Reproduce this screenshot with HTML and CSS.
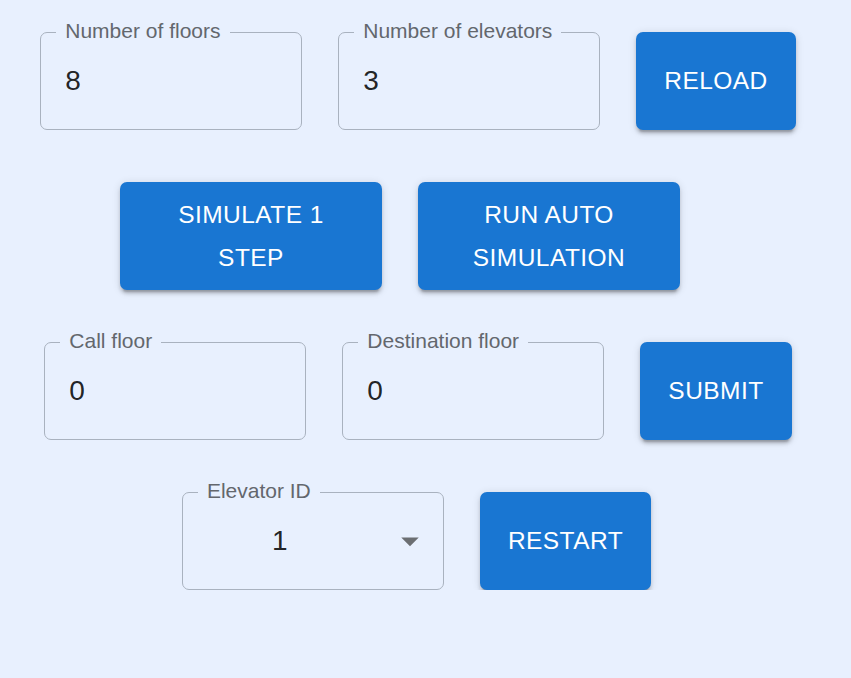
FILE: index.html
```html
<!DOCTYPE html>
<html lang="en">
<head>
<meta charset="utf-8">
<title>Elevator simulation</title>
<link rel="stylesheet" href="styles.css">
</head>
<body>
<main class="page">
  <div class="row">
    <div class="field">
      <label class="field-label">Number of floors</label>
      <input class="field-input" type="text" value="8">
    </div>
    <div class="field">
      <label class="field-label">Number of elevators</label>
      <input class="field-input" type="text" value="3">
    </div>
    <button class="btn">RELOAD</button>
  </div>

  <div class="row row-offset">
    <button class="btn btn-wide">SIMULATE 1 STEP</button>
    <button class="btn btn-wide">RUN AUTO SIMULATION</button>
  </div>

  <div class="row">
    <div class="field">
      <label class="field-label">Call floor</label>
      <input class="field-input" type="text" value="0">
    </div>
    <div class="field">
      <label class="field-label">Destination floor</label>
      <input class="field-input" type="text" value="0">
    </div>
    <button class="btn">SUBMIT</button>
  </div>

  <div class="row row-last">
    <div class="field field-select">
      <label class="field-label">Elevator ID</label>
      <span class="select-value">1</span>
      <svg class="select-arrow" viewBox="0 0 24 24" width="42" height="42" aria-hidden="true"><path d="M7 10l5 5 5-5z"/></svg>
    </div>
    <button class="btn">RESTART</button>
  </div>
</main>
</body>
</html>
```

FILE: styles.css
```css
html, body {
  margin: 0;
  padding: 0;
  background: #e8f0fe;
}

body {
  font-family: "Liberation Sans", Arial, Helvetica, sans-serif;
  color: rgba(0, 0, 0, 0.87);
}

.page {
  width: 836px;
  padding-top: 32px;
  display: flex;
  flex-direction: column;
  gap: 52px;
}

.row {
  display: flex;
  justify-content: center;
  align-items: stretch;
  gap: 36px;
}

.row-offset {
  padding-right: 36px;
}

.row-last {
  padding-right: 3px;
}

.field {
  position: relative;
  box-sizing: border-box;
  width: 262px;
  height: 98px;
  border: 1px solid #a9b2bf;
  border-radius: 7px;
  display: flex;
  align-items: center;
  padding: 0 24px;
}

.field-label {
  position: absolute;
  top: -17px;
  left: 15px;
  padding: 0 9px;
  background: #e8f0fe;
  font-size: 21px;
  line-height: 30px;
  color: #63676d;
  white-space: nowrap;
}

.field-input {
  width: 100%;
  border: none;
  outline: none;
  background: transparent;
  font-family: inherit;
  font-size: 28px;
  color: rgba(0, 0, 0, 0.87);
  padding: 0;
  margin: 0;
  line-height: 40px;
  height: 40px;
}

.field-select {
  padding-left: 89px;
}

.select-value {
  font-size: 28px;
  line-height: 40px;
  color: rgba(0, 0, 0, 0.87);
}

.select-arrow {
  position: absolute;
  right: 12px;
  top: 50%;
  margin-top: -21px;
  fill: #6b6e72;
}

.btn {
  box-sizing: border-box;
  border: none;
  border-radius: 7px;
  background: #1976d2;
  color: #ffffff;
  font-family: inherit;
  font-size: 24.5px;
  font-weight: 500;
  letter-spacing: 0.45px;
  line-height: 43.5px;
  padding: 10.5px 28px;
  display: inline-flex;
  align-items: center;
  justify-content: center;
  text-align: center;
  box-shadow: 0 5px 2px -3.5px rgba(0, 0, 0, 0.2),
              0 3.5px 3.5px 0 rgba(0, 0, 0, 0.14),
              0 1.75px 8.75px 0 rgba(0, 0, 0, 0.12);
  cursor: pointer;
}

.btn-wide {
  width: 262px;
}
```
